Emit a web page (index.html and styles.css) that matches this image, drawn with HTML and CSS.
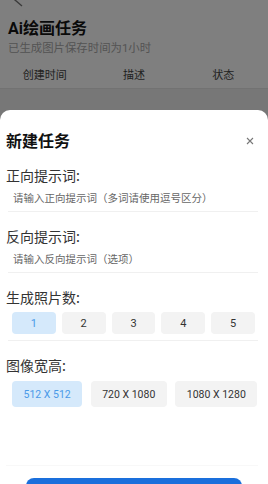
FILE: index.html
```html
<!DOCTYPE html>
<html lang="zh-CN">
<head>
<meta charset="utf-8">
<title>Ai绘画任务</title>
<link rel="stylesheet" href="styles.css">
</head>
<body>
<div class="page">
  <div class="nav">
    <svg class="back" width="12" height="14" viewBox="0 0 12 14"><polyline points="10,1 3,7 10,13" fill="none" stroke="#777" stroke-width="1.4"/></svg>
  </div>
  <h1 class="title">Ai绘画任务</h1>
  <p class="subtitle">已生成图片保存时间为1小时</p>
  <div class="thead">
    <div class="th">创建时间</div>
    <div class="th">描述</div>
    <div class="th">状态</div>
  </div>
</div>
<div class="mask"></div>
<div class="sheet">
  <div class="sheet-head">
    <div class="sheet-title">新建任务</div>
    <svg class="close" width="8" height="8" viewBox="0 0 8 8"><path d="M1 1L7 7M7 1L1 7" stroke="#777" stroke-width="1.1" fill="none"/></svg>
  </div>
  <div class="label">正向提示词:</div>
  <div class="field">请输入正向提示词（多词请使用逗号区分）</div>
  <div class="label">反向提示词:</div>
  <div class="field">请输入反向提示词（选项）</div>
  <div class="label">生成照片数:</div>
  <div class="counts">
    <div class="chip count active">1</div>
    <div class="chip count">2</div>
    <div class="chip count">3</div>
    <div class="chip count">4</div>
    <div class="chip count">5</div>
  </div>
  <div class="label">图像宽高:</div>
  <div class="sizes">
    <div class="chip size active">512 X 512</div>
    <div class="chip size">720 X 1080</div>
    <div class="chip size">1080 X 1280</div>
  </div>
  <div class="footer">
    <div class="submit"></div>
  </div>
</div>
</body>
</html>
```
FILE: styles.css
```css
html, body {
  margin: 0;
  padding: 0;
  height: 100%;
  overflow: hidden;
}
body {
  background: #eeeeee;
  font-family: Roboto, "Noto Sans CJK SC", sans-serif;
  color: #333;
}
.page {
  background: #fff;
}
.nav {
  height: 14px;
  margin-top: -7px;
  padding-left: 12px;
}
.back {
  display: block;
}
.title {
  margin: 12px 0 0 8px;
  font-size: 16px;
  line-height: 20px;
  font-weight: 700;
  color: #141414;
}
.subtitle {
  margin: 2px 0 0 8px;
  font-size: 11.4px;
  line-height: 14px;
  color: #a8a8a8;
}
.thead {
  display: flex;
  margin-top: 5px;
  height: 28px;
  border-bottom: 1px solid #e4e4e4;
}
.th {
  flex: 1;
  display: flex;
  align-items: center;
  justify-content: center;
  font-size: 11px;
  color: #444;
}
.mask {
  position: fixed;
  inset: 0;
  background: rgba(0, 0, 0, 0.5);
}
.sheet {
  position: fixed;
  top: 110px;
  left: 0;
  right: 0;
  height: 430px;
  background: #fff;
  border-radius: 10px 10px 0 0;
  padding: 0 10px 0 6px;
  font-family: "Noto Sans CJK SC", Roboto, sans-serif;
}
.sheet-head {
  display: flex;
  align-items: center;
  justify-content: space-between;
  height: 21px;
  padding-top: 20px;
}
.sheet-title {
  font-size: 16px;
  font-weight: 700;
  color: #111;
  line-height: 21px;
}
.close {
  margin-right: 4px;
}
.label {
  margin-top: 14px;
  font-size: 14px;
  line-height: 20px;
  color: #333;
}
.field {
  margin-left: 2px;
  padding: 5px 0 5px 5px;
  font-size: 10.5px;
  line-height: 16px;
  color: #666;
  border-bottom: 1px solid #f0f0f0;
}
.counts {
  display: flex;
  gap: 6px;
  margin-left: 2px;
  padding: 5px 3px 6px 4px;
  border-bottom: 1px solid #f0f0f0;
}
.chip {
  display: flex;
  align-items: center;
  justify-content: center;
  border-radius: 4px;
  background: #f3f3f3;
  color: #333;
  font-family: Roboto, sans-serif;
}
.chip.active {
  background: #d5e9fb;
  color: #4a9ae8;
}
.count {
  flex: 1;
  height: 22px;
  font-size: 11px;
}
.sizes {
  display: flex;
  gap: 8.5px;
  margin: 6px 0 0 6px;
}
.size {
  height: 26px;
  padding: 0 11.5px;
  font-size: 10.5px;
}
.footer {
  margin-top: 58px;
  border-top: 1px solid #f8f8f8;
  padding: 12px 16px 0 20px;
}
.submit {
  height: 40px;
  border-radius: 8px;
  background: #1a6fdc;
}
```
